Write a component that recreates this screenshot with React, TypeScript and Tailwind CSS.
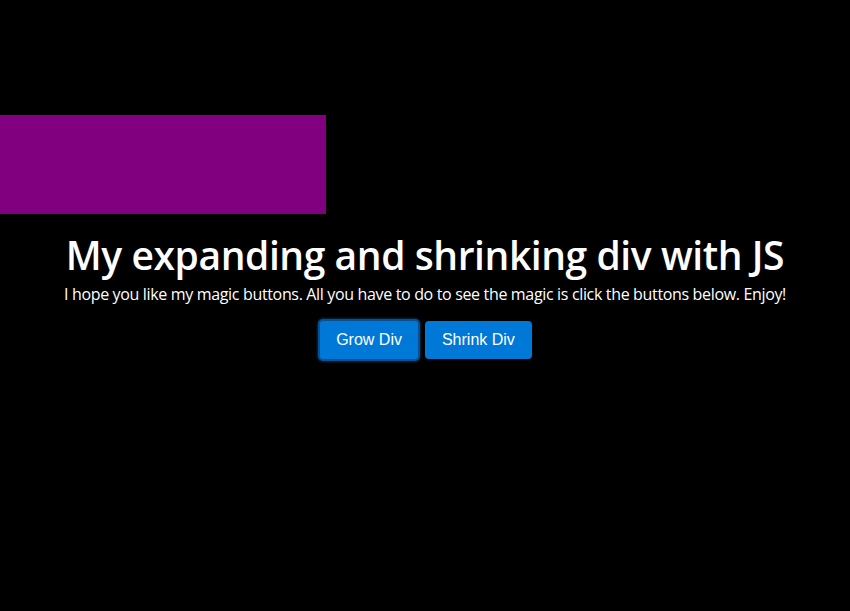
export default function App() {
  return (
    <div className="min-h-[611px] w-full bg-black text-white pt-[115px]" style={{ fontFamily: '"Open Sans", "Noto Sans", sans-serif' }}>
      <div className="h-[99px] w-[326px] bg-[#800080]"></div>
      <div className="text-center">
        <h1 className="mt-[17px] text-[39px] leading-[48px] font-semibold tracking-[-0.42px]">My expanding and shrinking div with JS</h1>
        <p className="mt-[4px] text-[16px] leading-[22px] tracking-[-0.34px]">
          I hope you like my magic buttons. All you have to do to see the magic is click the buttons below. Enjoy!
        </p>
        <div className="mt-[14px] flex justify-center items-center gap-[5px]" style={{ fontFamily: '"Liberation Sans", Arial, sans-serif' }}>
          <button className="h-[42px] px-[16px] rounded-[5px] bg-[#0078d7] text-white text-[16px] border-2 border-[#0a4f8f] shadow-[0_0_3px_#0a4f8f]">
            Grow Div
          </button>
          <button className="h-[38px] px-[17px] rounded-[4px] bg-[#0078d7] text-white text-[16px]">
            Shrink Div
          </button>
        </div>
      </div>
    </div>
  );
}
